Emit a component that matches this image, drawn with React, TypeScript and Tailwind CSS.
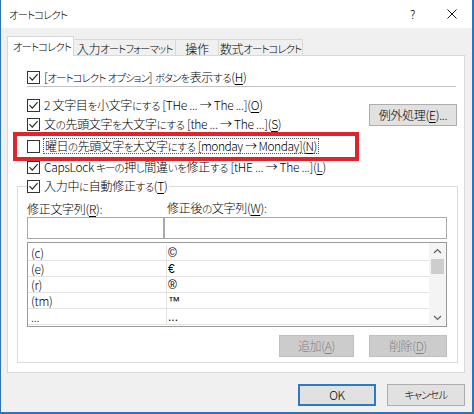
import React from "react";

// Meiryo UI has narrow kana; shrink kana runs so the line lengths match
const J = ({ t }: { t: string }) => (
  <>
    {t.split(/([\u3040-\u309f]+|[\u30a0-\u30ff]+)/).map((s, i) =>
      /[\u30a0-\u30ff]/.test(s) ? (
        <span key={i} className="text-[10.5px] tracking-[-1px]">
          {s}
        </span>
      ) : /[\u3040-\u309f]/.test(s) ? (
        <span key={i} className="text-[10.5px] tracking-[-0.4px]">
          {s}
        </span>
      ) : (
        <React.Fragment key={i}>{s}</React.Fragment>
      )
    )}
  </>
);

const U = ({ children }: { children: React.ReactNode }) => (
  <span className="underline underline-offset-[2px]">{children}</span>
);

const Label = ({ t, k, after = "" }: { t: string; k: string; after?: string }) => (
  <>
    <J t={t} />(<U>{k}</U>){after}
  </>
);

const Check = ({ checked }: { checked: boolean }) => (
  <span className="w-[13px] h-[13px] border border-[#333333] bg-white flex items-center justify-center shrink-0">
    {checked && (
      <svg width="11" height="11" viewBox="0 0 11 11">
        <path d="M1.5 5.2 L4.3 8.2 L9.6 2.2" fill="none" stroke="#222222" strokeWidth="1.1" />
      </svg>
    )}
  </span>
);

const CheckRow = ({
  checked,
  className,
  children,
}: {
  checked: boolean;
  className: string;
  children: React.ReactNode;
}) => (
  <div className={`flex items-center gap-[4px] ${className}`}>
    <Check checked={checked} />
    <span className="whitespace-nowrap">{children}</span>
  </div>
);

const rows = [
  ["(c)", "©"],
  ["(e)", "€"],
  ["(r)", "®"],
  ["(tm)", "™"],
  ["...", "..."],
];

const App = () => {
  return (
    <div className="w-[474px] h-[414px] bg-[#f0f0f0] border-l border-r-2 border-b-2 border-[#2f74b5] flex flex-col text-[12px] leading-[16px] tracking-[-0.3px] font-light text-black font-['Noto_Sans_CJK_JP','Noto_Sans_CJK_SC',sans-serif] [font-feature-settings:'palt'] overflow-hidden">
      {/* title bar */}
      <div className="h-[28px] bg-white flex items-center pl-[8px] pr-[15px] shrink-0">
        <span>
          <J t="オートコレクト" />
        </span>
        <span className="ml-auto mr-[32px]">?</span>
        <svg width="10" height="10" viewBox="0 0 10 10">
          <path d="M0.5 0.5 L9.5 9.5 M9.5 0.5 L0.5 9.5" stroke="#111111" strokeWidth="1" />
        </svg>
      </div>

      <div className="pl-[6px] pt-[8px]">
        {/* tabs */}
        <div className="flex items-end h-[19px] whitespace-nowrap">
          <div className="w-[67px] h-[20px] -mb-px bg-white border border-b-0 border-[#d9d9d9] pl-[5px] flex items-center relative z-10">
            <J t="オートコレクト" />
          </div>
          <div className="w-[102px] h-[16px] border-t border-r border-[#d9d9d9] flex items-center justify-center pt-[2px]">
            <J t="入力オートフォーマット" />
          </div>
          <div className="w-[43px] h-[16px] border-t border-r border-[#d9d9d9] flex items-center justify-center pt-[2px]">
            操作
          </div>
          <div className="w-[84px] h-[16px] border-t border-r border-[#d9d9d9] flex items-center justify-center pt-[2px]">
            <J t="数式オートコレクト" />
          </div>
        </div>

        {/* panel */}
        <div className="w-[458px] h-[318px] bg-white border border-[#d9d9d9] pt-[12px]">
          <div className="pl-[19px] pr-[7px]">
            <CheckRow checked className="h-[18px]">
              <Label t="[オートコレクト オプション] ボタンを表示する" k="H" />
            </CheckRow>
            <div className="h-px bg-[#c4c4c4] mr-[1px]" />
            <div className="flex mt-[9px]">
              <div className="flex flex-col">
                <CheckRow checked className="h-[19px]">
                  <Label t="2 文字目を小文字にする [THe ... → The ...]" k="O" />
                </CheckRow>
                <CheckRow checked className="h-[19px]">
                  <Label t="文の先頭文字を大文字にする [the ... → The ...]" k="S" />
                </CheckRow>
                <div className="h-[24px] flex items-center gap-[3px] relative">
                  <Check checked={false} />
                  <span className="whitespace-nowrap border border-dotted border-[#555555] px-[1px] leading-[13px] tracking-[-0.5px]">
                    <Label t="曜日の先頭文字を大文字にする [monday → Monday]" k="N" />
                  </span>
                  <div className="absolute left-[-14px] top-[-2px] w-[346px] h-[29px] border-[4px] border-[#e0242e]" />
                </div>
                <CheckRow checked className="h-[19px]">
                  <Label t="CapsLock キーの押し間違いを修正する [tHE ... → The ...]" k="L" />
                </CheckRow>
              </div>
              <button className="ml-auto mt-[8px] w-[88px] h-[22px] bg-[#e1e1e1] border border-[#adadad] flex items-center justify-center">
                <Label t="例外処理" k="E" after="..." />
              </button>
            </div>
          </div>

          {/* group */}
          <fieldset className="ml-[9px] mr-[6px] border border-[#dcdcdc] pl-[9px] pr-[10px] pb-[5px]">
            <legend className="h-[18px] pr-[2px]">
              <CheckRow checked className="h-[18px]">
                <Label t="入力中に自動修正する" k="T" />
              </CheckRow>
            </legend>
            <div className="grid grid-cols-[137px_283px] mt-[5px] h-[14px] items-center whitespace-nowrap">
              <span>
                <Label t="修正文字列" k="R" after=":" />
              </span>
              <span className="pl-[3px]">
                <Label t="修正後の文字列" k="W" after=":" />
              </span>
            </div>
            <div className="grid grid-cols-[137px_283px] mt-[3px]">
              <div className="h-[22px] border border-[#a9a9a9] bg-white" />
              <div className="h-[22px] border border-[#a9a9a9] bg-white" />
            </div>
            <div className="mt-[3px] h-[85px] border border-[#9a9a9a] bg-white flex">
              <div className="flex-1 pt-[2px]">
                {rows.map(([a, b], i) => (
                  <div key={i} className="h-[16px] border-b border-[#e3e3e3] flex">
                    <div className="w-[138px] pl-[3px] flex items-center">{a}</div>
                    <div className="flex-1 border-l border-[#e3e3e3] pl-[1px] flex items-center font-['Liberation_Sans',sans-serif] font-normal tracking-normal text-[12px]">
                      {b}
                    </div>
                  </div>
                ))}
              </div>
              <div className="w-[17px] bg-[#f4f4f4] flex flex-col items-center">
                <div className="h-[16px] flex items-center justify-center">
                  <svg width="9" height="6" viewBox="0 0 9 6">
                    <path d="M1 5 L4.5 1.5 L8 5" fill="none" stroke="#606060" strokeWidth="1.2" />
                  </svg>
                </div>
                <div className="w-[13px] h-[15px] bg-[#cdcdcd]" />
                <div className="flex-1" />
                <div className="h-[16px] flex items-center justify-center">
                  <svg width="9" height="6" viewBox="0 0 9 6">
                    <path d="M1 1 L4.5 4.5 L8 1" fill="none" stroke="#606060" strokeWidth="1.2" />
                  </svg>
                </div>
              </div>
            </div>
            <div className="flex justify-end gap-[15px] mt-[8px]">
              <button className="w-[75px] h-[22px] bg-[#cccccc] border border-[#bfbfbf] text-[#838383] flex items-center justify-center">
                <Label t="追加" k="A" />
              </button>
              <button className="w-[78px] h-[22px] bg-[#cccccc] border border-[#bfbfbf] text-[#838383] flex items-center justify-center">
                <Label t="削除" k="D" />
              </button>
            </div>
          </fieldset>
        </div>
      </div>

      {/* bottom buttons */}
      <div className="flex justify-end gap-[11px] pr-[7px] mt-[11px]">
        <button className="w-[78px] h-[22px] bg-[#e1e1e1] border-2 border-[#2a7ac8] flex items-center justify-center">
          OK
        </button>
        <button className="w-[78px] h-[22px] bg-[#e1e1e1] border border-[#adadad] flex items-center justify-center">
          <J t="キャンセル" />
        </button>
      </div>
    </div>
  );
};

export default App;
